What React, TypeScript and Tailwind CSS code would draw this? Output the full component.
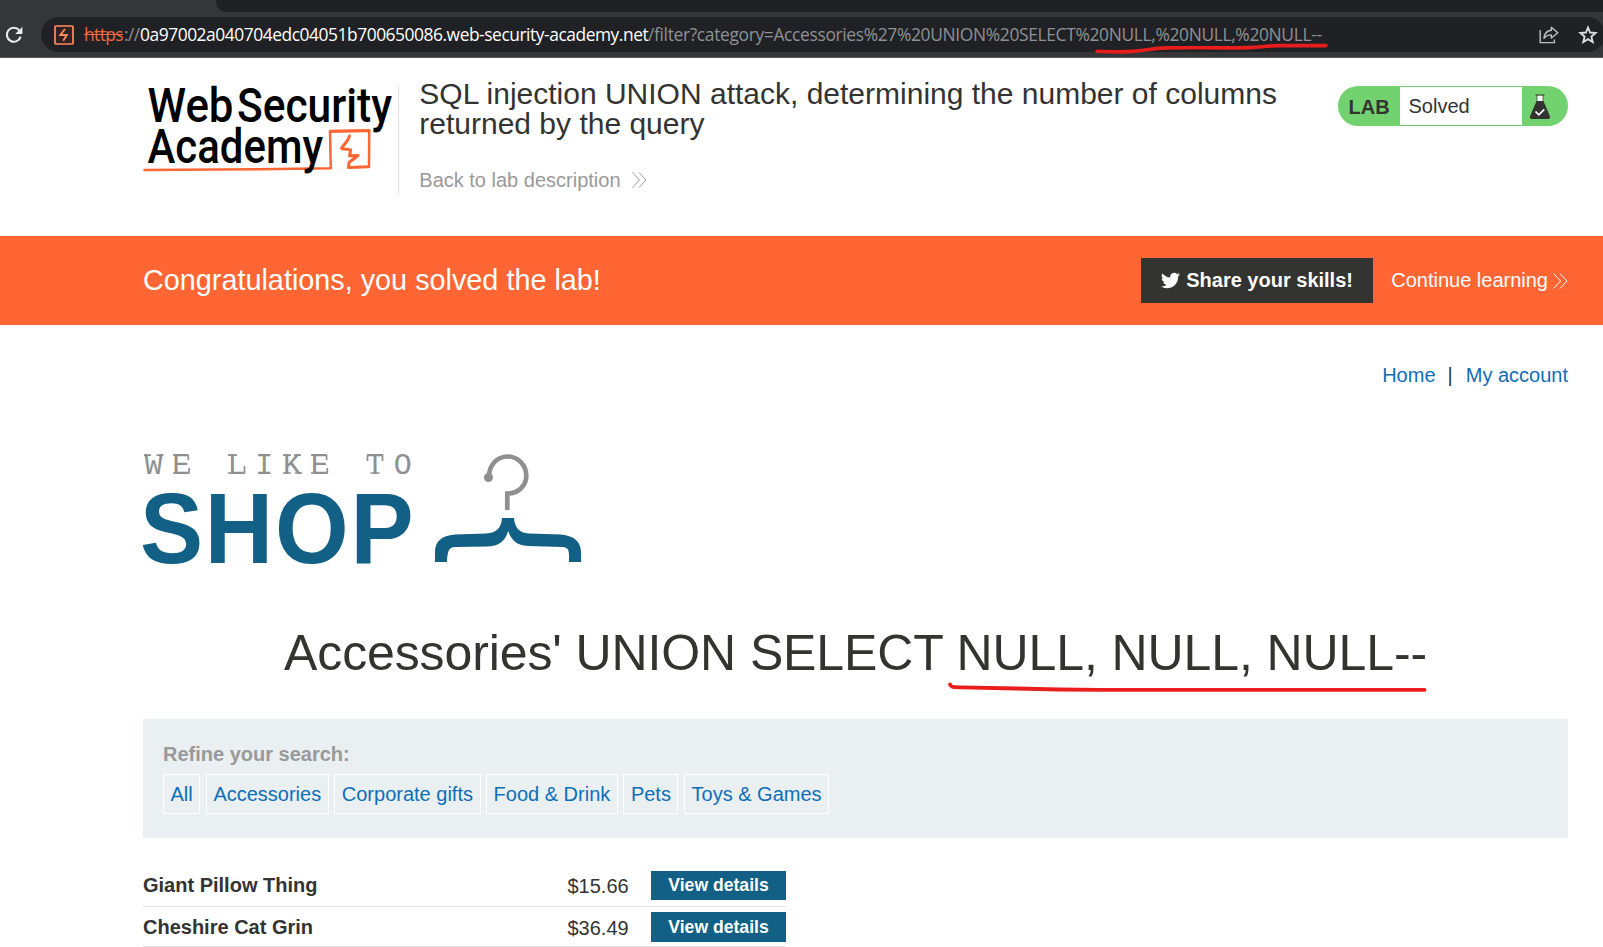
import React from "react";

const categories = ["All", "Accessories", "Corporate gifts", "Food & Drink", "Pets", "Toys & Games"];

const products = [
  { name: "Giant Pillow Thing", price: "$15.66" },
  { name: "Cheshire Cat Grin", price: "$36.49" },
];

function BrowserBar() {
  return (
    <div className="h-[58px] bg-[#35363a] border-b border-[#5b5a60] overflow-hidden">
      <div className="ml-[216px] h-3 bg-[#202124] rounded-bl-[10px]" />
      <div className="mt-[5px] flex items-center h-[35px]">
        <svg className="ml-1 mr-[17px] shrink-0" width="20" height="20" viewBox="0 0 20 20" fill="none">
          <path d="M15.2 5.2A7 7 0 1 0 16.6 11.6" stroke="#e8eaed" strokeWidth="2.1" />
          <path d="M18.4 1.8V9H11.2Z" fill="#e8eaed" />
        </svg>
        <div className="relative flex items-center w-[1564px] shrink-0 h-[35px] bg-[#202124] rounded-full">
          <svg className="ml-[13px] mr-[10px] shrink-0" width="20" height="20" viewBox="0 0 20 20" fill="none">
            <rect x="1" y="1" width="18" height="18" rx="1" stroke="#ff8a5e" strokeWidth="1.7" fill="#2e2322" />
            <path d="M11 4L6.300 10H12.800L9.200 15.800" stroke="#ff8a5e" strokeWidth="1.900" />
          </svg>
          <div className="flex whitespace-nowrap text-[17.4px] font-['Open_Sans',sans-serif] pb-px">
            <span className="w-[40px] text-[#f0683f] line-through tracking-[-0.6px]">https</span>
            <span className="w-[16px] text-[#8e9196] tracking-[-0.6px]">://</span>
            <span className="w-[508px] text-white tracking-[-0.46px]">0a97002a040704edc04051b700650086.web-security-academy.net</span>
            <span className="text-[#8e9196] tracking-[-0.34px]">/filter?category=Accessories%27%20UNION%20SELECT%20NULL,%20NULL,%20NULL--</span>
          </div>
          <svg className="absolute left-[1498px] top-[8px]" width="20" height="19" viewBox="0 0 20 19" fill="none" stroke="#bdc1c6" strokeWidth="1.4">
            <path d="M1.2 5V17.6H15.4V14.6" />
            <path d="M12.3 2.2L18.8 7.7L12.3 13V9.9C9 9.8 7 10.8 5 13.4C5.4 9 7.6 5.8 12.3 5.3Z" strokeLinejoin="round" />
          </svg>
          <svg className="absolute left-[1537px] top-[8px]" width="20" height="20" viewBox="0 0 20 20" fill="none" stroke="#dadce0" strokeWidth="1.9">
            <path d="M10 2.5L12.1 7.5L17.6 8L13.4 11.6L14.7 17L10 14.1L5.3 17L6.6 11.6L2.4 8L7.9 7.5Z" />
          </svg>
          <svg className="absolute left-[1050px] top-[22px]" width="240" height="18" viewBox="0 0 240 18" fill="none">
            <path d="M6 12.200C19 12.700 30 13.500 41 12.400C56 11.300 60 9.300 76 8.900C100 8.300 130 9.300 157 8.600C170 8.200 176 6.900 186 6.600H235" stroke="#ea1d1d" strokeWidth="3.6" strokeLinecap="round" />
          </svg>
        </div>
      </div>
    </div>
  );
}

function AcademyLogo() {
  return (
    <svg className="shrink-0 overflow-visible" width="255" height="108" viewBox="143 86 255 108" fill="none">
      <path
        d="M369 166.700L369.200 130.500L330 131.200L330.800 168.200L260 169.300L144.500 170"
        stroke="#ff6633" strokeWidth="2.500" strokeLinejoin="round" strokeLinecap="round"
      />
      <path d="M349.500 136C348 142 343 145 341.500 148.300C344 149.500 349 149 350.700 150L349.500 155.800L358 155.500L349 162.500L348.500 167.600L368.500 166.700M330.500 131.300L369 130.700" stroke="#ff6633" strokeWidth="3" strokeLinecap="round" strokeLinejoin="round" />
      <g fill="#000" fontFamily="Roboto, sans-serif" fontWeight="500" fontSize="48.200">
        <text x="147.500" y="122" textLength="86" lengthAdjust="spacingAndGlyphs">Web</text>
        <text x="237" y="122" textLength="155" lengthAdjust="spacingAndGlyphs">Security</text>
        <text x="147.500" y="163" textLength="175.500" lengthAdjust="spacingAndGlyphs">Academy</text>
      </g>
    </svg>
  );
}

function Chevrons({ className }: { className: string }) {
  return (
    <svg className={className} width="15" height="16" viewBox="0 0 15 16" fill="none" stroke="currentColor" strokeWidth="1">
      <path d="M0.500 0.500L7.500 8L0.500 15.500M7 0.500L14 8L7 15.500" />
    </svg>
  );
}

function LabHeader() {
  return (
    <header className="flex h-[178px] pt-7 pl-[143px] pr-[35px]">
      <AcademyLogo />
      <div className="w-px h-[108px] bg-[#e0e0e0] mr-5" />
      <div className="w-[900px] -mt-[7px] pl-[0.300px]">
        <h2 className="text-[30px] leading-[30px]">
          SQL injection UNION attack, determining the number of columns
          <br />
          returned by the query
        </h2>
        <a className="mt-[29px] flex items-center text-[20px] leading-[24px] text-[#999999]">
          Back to lab description
          <Chevrons className="ml-[11px]" />
        </a>
      </div>
      <div className="ml-auto flex w-[230px] h-10 rounded-[20px] bg-[#72d26f] p-px overflow-hidden">
        <span className="w-[61px] pl-[9.500px] text-[20px] leading-[40px] font-bold">LAB</span>
        <span className="w-[122px] bg-white pl-[8.500px] text-[20px] leading-[39px]">Solved</span>
        <svg className="ml-[7px] mt-[7px]" width="22" height="26" viewBox="0 0 22 26" fill="none">
          <path d="M8 1.500H14V8H8Z" fill="#fff" />
          <path d="M6.500 1H15.500" stroke="#33332f" strokeWidth="1.200" />
          <path d="M8 1V7M14 1V7" stroke="#33332f" strokeWidth="0.700" />
          <path d="M7.500 7H14.500L21 22.500C21.300 24 20.500 25 19.500 25H2.500C1.500 25 0.700 24 1 22.500Z" fill="#33332f" />
          <path d="M6.500 17.500L9.800 20.800L15.300 15.300" stroke="#fff" strokeWidth="1.700" />
        </svg>
      </div>
    </header>
  );
}

function SolvedBanner() {
  return (
    <section className="flex items-center h-[89px] bg-[#ff6633] text-white pl-[143px] pr-[35px]">
      <h4 className="text-[28.800px] leading-[34px] pb-px">Congratulations, you solved the lab!</h4>
      <button className="ml-auto flex items-center w-[232px] h-[45px] bg-[#333332] pl-5 text-[20px] font-bold">
        <svg className="mr-[6px]" width="19" height="19" viewBox="0 0 24 24" fill="#fff">
          <path d="M23.950 4.570a10 10 0 0 1-2.820.780 4.960 4.960 0 0 0 2.160-2.730c-.950.560-2 .960-3.130 1.190a4.920 4.920 0 0 0-8.380 4.480C7.690 8.100 4.070 6.130 1.640 3.160a4.920 4.920 0 0 0 1.520 6.570 4.900 4.900 0 0 1-2.230-.610v.060a4.920 4.920 0 0 0 3.950 4.830 5 5 0 0 1-2.210.080 4.940 4.940 0 0 0 4.600 3.420A9.870 9.870 0 0 1 0 19.540a13.990 13.990 0 0 0 7.550 2.210c9.050 0 14-7.500 14-13.980 0-.210 0-.420-.020-.630a9.940 9.940 0 0 0 2.460-2.550z" />
        </svg>
        <span className="pb-[2px]">Share your skills!</span>
      </button>
      <a className="ml-[18px] flex items-center text-[20px]">
        <span className="pb-[2px]">Continue learning</span>
        <Chevrons className="ml-[5px]" />
      </a>
    </section>
  );
}

function ShopLogo() {
  return (
    <svg className="block overflow-visible" width="440" height="114" viewBox="143 452 440 114" fill="none">
      <text x="144.500" y="474" fill="#8f8f8f" fontFamily="'Liberation Mono', monospace" fontSize="30" textLength="267.300">WE LIKE TO</text>
      {/* slab serifs of the typewriter-style tagline */}
      <path
        d="M144 455.200H151M156.500 455.200H163.500M173 455.200H178M173 473H178M188.300 455V460M189 473.500V468M228 455.200H237M228 473H234M244.500 474V466M283 455.200H291M283 473H291M294 455.200H301M295 473H302M311 455.200H316M311 473H316M326.600 455V460M327.300 473.500V468M370.500 473H379.500M367.500 455V461M382.500 455V461"
        stroke="#8f8f8f" strokeWidth="1.700"
      />
      <g transform="scale(0.94 1)">
        <text x="148.900 217.900 292.500 373" y="562.600" fill="#126085" fontFamily="'Liberation Sans', sans-serif" fontWeight="700" fontSize="100.700">SHOP</text>
      </g>
      <path d="M489 477C489 465 497 456.500 507.500 456.500C518 456.500 526.300 465 526.300 475.500C526.300 486 518 493.500 507.300 493.500V510" stroke="#8f8f8f" strokeWidth="4.700" />
      <circle cx="488.500" cy="477.500" r="4.500" fill="#8f8f8f" />
      <path
        d="M502 518H514C514.500 527 519 533 529 533.500L561 534.500C575 535.500 581 543 581 552V562H569V555C569 549 567 547 562 547L528 546C517 545.500 511 540 508.200 531C505.500 540 500 546 488 546.500L455 547C449 547.500 447.500 550 447 562H435V552C435 542 441 535.500 455 534.500L486 533.500C497 533 501.500 527 502 518Z"
        fill="#126085"
      />
    </svg>
  );
}

export default function App() {
  return (
    <div className="w-[1603px] h-[947px] overflow-hidden bg-white text-[#333332] font-['Liberation_Sans',Arial,sans-serif]">
      <BrowserBar />
      <LabHeader />
      <SolvedBanner />
      <main className="pl-[143px] pr-[35px]">
        <nav className="flex justify-end items-center pt-[38px] text-[20px] leading-[24px]">
          <a className="text-[#0e6eb8] mr-3">Home</a>
          <span className="mr-[13px]">|</span>
          <a className="text-[#0e6eb8]">My account</a>
        </nav>
        <div className="mt-[65px]">
          <ShopLogo />
        </div>
        <div className="relative mt-[56px] h-[97px]">
          <h1 className="text-center text-[50px] leading-[62px] whitespace-nowrap tracking-[-0.110px]">Accessories' UNION SELECT NULL, NULL, NULL--</h1>
          <svg className="absolute left-[804px] top-[58px]" width="484" height="16" viewBox="0 0 484 16" fill="none">
            <path d="M3 4.500C4 7.500 7 7.200 14 7.400L70 8.500C100 9.500 130 10 160 9.900H477.500" stroke="#ea1d1d" strokeWidth="3.800" strokeLinecap="round" />
          </svg>
        </div>
        <section className="h-[119px] bg-[#eaeff2] px-5 pt-[23px] text-[20px]">
          <div className="leading-[24px] font-bold text-[#999999]">Refine your search:</div>
          <div className="mt-2 flex gap-[5.560px]">
            {categories.map((c) => (
              <a key={c} className="h-10 border border-white px-[6.540px] leading-[39px] text-[#0e6eb8] whitespace-nowrap">{c}</a>
            ))}
          </div>
        </section>
        <section className="mt-[28px] w-[643px]">
          {products.map((p) => (
            <div key={p.name} className="group flex items-start h-[40px] first:h-[41px] pt-[5px] border-b border-[#e2e2e2] text-[20px]">
              <span className="w-[424.500px] font-bold leading-[31px] group-first:leading-[29px]">{p.name}</span>
              <span className="w-[83.500px] leading-[33px] group-first:leading-[31px]">{p.price}</span>
              <a className="w-[135px] h-[30px] group-first:h-[29px] bg-[#126085] text-white text-center font-bold text-[17.600px] leading-[30px] group-first:leading-[28px]">View details</a>
            </div>
          ))}
        </section>
      </main>
    </div>
  );
}
